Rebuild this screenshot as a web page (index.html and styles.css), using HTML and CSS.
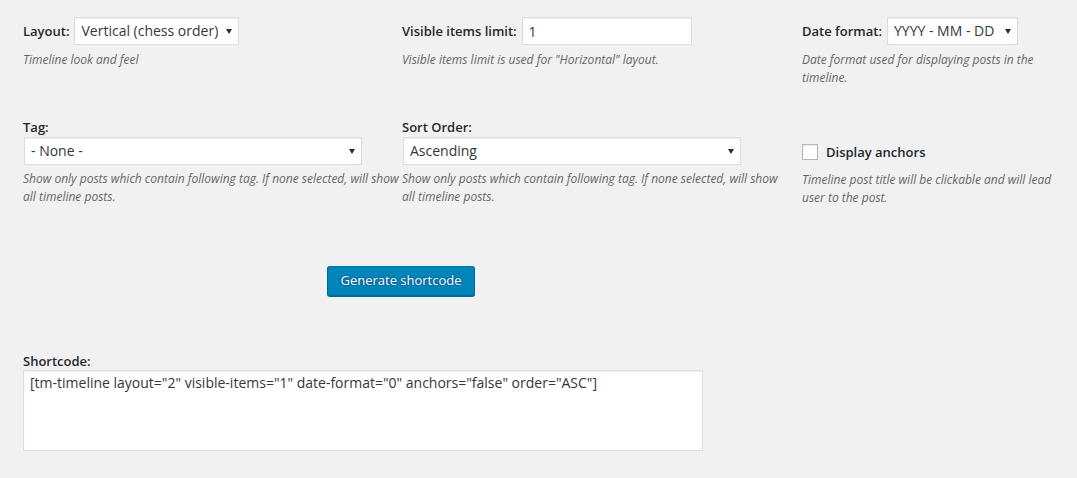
FILE: index.html
```html
<!DOCTYPE html>
<html lang="en">
<head>
<meta charset="utf-8">
<title>Timeline shortcode generator</title>
<link rel="stylesheet" href="styles.css">
</head>
<body>
<main class="page">
  <div class="fields">
    <div class="field">
      <div class="inline-row">
        <label class="label" for="layout">Layout:</label>
        <span class="select-wrap">
          <select id="layout" class="select sel-layout">
            <option>Vertical (chess order)</option>
          </select>
        </span>
      </div>
      <p class="description">Timeline look and feel</p>
    </div>
    <div class="field field-mid">
      <div class="inline-row">
        <label class="label" for="limit">Visible items limit:</label>
        <input id="limit" class="text-input" type="text" value="1">
      </div>
      <p class="description">Visible items limit is used for "Horizontal" layout.</p>
    </div>
    <div class="field">
      <div class="inline-row">
        <label class="label" for="datefmt">Date format:</label>
        <span class="select-wrap">
          <select id="datefmt" class="select sel-date">
            <option>YYYY - MM - DD</option>
          </select>
        </span>
      </div>
      <p class="description">Date format used for displaying posts in the timeline.</p>
    </div>

    <div class="field">
      <label class="label block-label" for="tag">Tag:</label>
      <span class="select-wrap wide">
        <select id="tag" class="select sel-wide">
          <option>- None -</option>
        </select>
      </span>
      <p class="description">Show only posts which contain following tag. If none selected, will show all timeline posts.</p>
    </div>
    <div class="field field-mid">
      <label class="label block-label" for="order">Sort Order:</label>
      <span class="select-wrap wide">
        <select id="order" class="select sel-wide">
          <option>Ascending</option>
        </select>
      </span>
      <p class="description">Show only posts which contain following tag. If none selected, will show all timeline posts.</p>
    </div>
    <div class="field">
      <div class="check-row">
        <input id="anchors" class="checkbox" type="checkbox">
        <label class="label" for="anchors">Display anchors</label>
      </div>
      <p class="description">Timeline post title will be clickable and will lead user to the post.</p>
    </div>
  </div>

  <div class="actions">
    <button class="button-primary" type="button">Generate shortcode</button>
  </div>

  <div class="shortcode">
    <label class="label shortcode-label" for="shortcode">Shortcode:</label>
    <textarea id="shortcode" class="textarea">[tm-timeline layout="2" visible-items="1" date-format="0" anchors="false" order="ASC"]</textarea>
  </div>
</main>
</body>
</html>
```

FILE: styles.css
```css
* {
  box-sizing: border-box;
}

html, body {
  margin: 0;
  padding: 0;
  background: #f1f1f1;
}

body {
  font-family: "Open Sans", "Liberation Sans", sans-serif;
  font-size: 13px;
  color: #444;
}

.page {
  padding: 16px 23px 0 23px;
}

.fields {
  display: grid;
  grid-template-columns: 379px 400px 1fr;
  row-gap: 31px;
  align-items: start;
}

.field {
  min-width: 0;
}

.field-mid {
  padding-right: 21px;
}

.inline-row {
  display: flex;
  align-items: center;
  gap: 4px;
  height: 30px;
}

.label {
  font-weight: 600;
  font-size: 13px;
  color: #23282d;
  line-height: 18px;
}

.block-label {
  display: block;
  height: 18px;
}

.select-wrap {
  position: relative;
  display: inline-block;
  margin: 1px;
}

.select-wrap.wide {
  display: block;
  width: 338px;
}

.select-wrap::after {
  content: "";
  position: absolute;
  right: 7px;
  top: 12px;
  width: 0;
  height: 0;
  border-left: 3px solid transparent;
  border-right: 3px solid transparent;
  border-top: 5px solid #2a2a2a;
  pointer-events: none;
}

.select {
  -webkit-appearance: none;
  appearance: none;
  display: block;
  height: 28px;
  margin: 0;
  padding: 0 20px 0 6px;
  border: 1px solid #ddd;
  border-radius: 0;
  background: #fff;
  box-shadow: inset 0 1px 2px rgba(0, 0, 0, 0.07);
  font-family: "Open Sans", "Liberation Sans", sans-serif;
  font-size: 14px;
  line-height: 26px;
  color: #32373c;
  outline: none;
}

.sel-layout {
  width: 165px;
}

.sel-date {
  width: 131px;
}

.sel-wide {
  width: 338px;
}

.text-input {
  width: 170px;
  height: 28px;
  margin: 1px;
  padding: 0 6px;
  border: 1px solid #ddd;
  background: #fff;
  box-shadow: inset 0 1px 2px rgba(0, 0, 0, 0.07);
  font-family: "Open Sans", "Liberation Sans", sans-serif;
  font-size: 14px;
  color: #32373c;
  outline: none;
}

.description {
  margin: 5px 0 0 0;
  font-size: 12px;
  line-height: 18px;
  font-style: italic;
  color: #666;
}

.check-row {
  display: flex;
  align-items: center;
  gap: 8px;
  height: 30px;
  margin-top: 18px;
  padding-top: 2px;
}

.checkbox {
  -webkit-appearance: none;
  appearance: none;
  width: 16px;
  height: 16px;
  margin: 0;
  border: 1px solid #b4b9be;
  background: #fff;
  box-shadow: inset 0 1px 2px rgba(0, 0, 0, 0.1);
  flex: none;
}

.actions {
  display: flex;
  justify-content: center;
  width: 756px;
  margin-top: 59px;
}

.button-primary {
  height: 30px;
  padding: 0 12px 2px;
  border: 1px solid #0073aa;
  border-color: #0073aa #006799 #006799;
  border-radius: 3px;
  background: #0085ba;
  box-shadow: 0 1px 0 #006799;
  color: #fff;
  font-family: "Open Sans", "Liberation Sans", sans-serif;
  font-size: 13px;
  line-height: 26px;
  text-shadow: 0 -1px 1px #006799, 1px 0 1px #006799, 0 1px 1px #006799, -1px 0 1px #006799;
  cursor: pointer;
}

.shortcode {
  margin-top: 57px;
}

.shortcode-label {
  display: block;
  line-height: 17px;
}

.textarea {
  display: block;
  width: 680px;
  height: 81px;
  margin: 0;
  padding: 2px 6px;
  border: 1px solid #ddd;
  background: #fff;
  box-shadow: inset 0 1px 2px rgba(0, 0, 0, 0.07);
  font-family: "Open Sans", "Liberation Sans", sans-serif;
  font-size: 14px;
  line-height: 20px;
  color: #32373c;
  resize: none;
  outline: none;
}
```
